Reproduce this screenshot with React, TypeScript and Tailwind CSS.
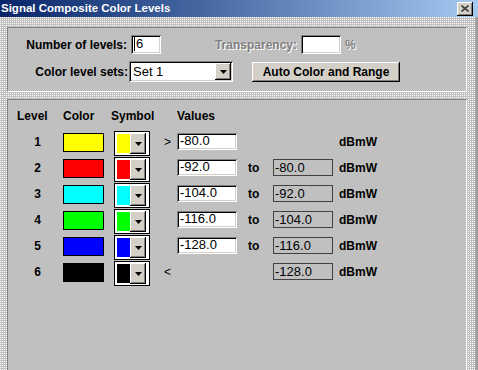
import React from "react";

const raised =
  "bg-[#d4d0c8] shadow-[inset_-1px_-1px_#000,inset_1px_1px_#fff,inset_-2px_-2px_#808080,inset_2px_2px_#d4d0c8]";
const sunken =
  "bg-white shadow-[inset_1px_1px_#808080,inset_-1px_-1px_#fff,inset_2px_2px_#000,inset_-2px_-2px_#d4d0c8]";
const dotted = "bg-[#c0c0c0] bg-[image:conic-gradient(#c0c0c0_75%,#fff_0)] bg-[length:2px_2px]";
const disabled = "text-[#808080] [text-shadow:1px_1px_0_#fff]";

type Level = {
  n: number;
  color: string;
  mark: string;
  value?: string;
  to?: string;
};

const levels: Level[] = [
  { n: 1, color: "#ffff00", mark: ">", value: "-80.0" },
  { n: 2, color: "#ff0000", mark: "", value: "-92.0", to: "-80.0" },
  { n: 3, color: "#00ffff", mark: "", value: "-104.0", to: "-92.0" },
  { n: 4, color: "#00ff00", mark: "", value: "-116.0", to: "-104.0" },
  { n: 5, color: "#0000ff", mark: "", value: "-128.0", to: "-116.0" },
  { n: 6, color: "#000000", mark: "<", to: "-128.0" },
];

function Arrow() {
  return (
    <svg width="7" height="4" viewBox="0 0 7 4">
      <polygon points="0,0 7,0 3.5,4" fill="#000" />
    </svg>
  );
}

function DropButton({ className }: { className: string }) {
  return <div className={`${raised} ${className} flex items-center justify-center`}><Arrow /></div>;
}

function Row({ l }: { l: Level }) {
  return (
    <div className="flex h-[26px] items-start">
      <div className="mt-[4px] w-[55px] pl-[4px] text-center font-bold leading-[14px]">{l.n}</div>
      <div className="mt-[2px] h-[19px] w-[41px] border border-black" style={{ background: l.color }} />
      <div className="ml-[10px] flex h-[25px] w-[36px] items-center border border-black bg-white">
        <div className="ml-[2px] h-[19px] w-[13px]" style={{ background: l.color }} />
        <DropButton className="h-[21px] w-[16px]" />
      </div>
      <div className="mt-[4px] w-[27px] pl-[14px] leading-[14px]">{l.mark}</div>
      <div className="mt-[2px] w-[60px]">
        {l.value && (
          <div className={`${sunken} h-[17px] pl-[3px] text-[13px] leading-[15px]`}>{l.value}</div>
        )}
      </div>
      <div className="mt-[4px] w-[36px] pl-[11px] font-bold leading-[14px]">{l.value && l.to ? "to" : ""}</div>
      <div className="mt-[2px] w-[60px]">
        {l.to && (
          <div className="h-[17px] border border-[#404040] pl-[1px] text-[13px] leading-[15px]">{l.to}</div>
        )}
      </div>
      <div className="ml-[6px] mt-[4px] font-bold leading-[14px]">dBmW</div>
    </div>
  );
}

export default function App() {
  return (
    <div className="flex h-[370px] w-[478px] flex-col overflow-hidden font-['Liberation_Sans',Arial,sans-serif] text-[12px] text-black">
      <div className="flex h-[17px] shrink-0 items-center bg-gradient-to-r from-[#0a246a] to-[#a6caf0] pl-[1px] pr-[5px]">
        <span className="text-[11.5px] font-bold text-white">Signal Composite Color Levels</span>
        <div className={`${raised} ml-auto flex h-[14px] w-[16px] items-center justify-center`}>
          <svg width="8" height="7" viewBox="0 0 8 7">
            <path d="M0.5 0.5 L7.5 6.5 M7.5 0.5 L0.5 6.5" stroke="#404040" strokeWidth="1.6" />
          </svg>
        </div>
      </div>

      <div className={`${dotted} flex flex-1`}>
        <div className="flex flex-1 flex-col pl-[7px] pr-[8px] pt-[10px]">
          <div className="h-[65px] shrink-0 border-b border-l border-r border-t border-b-white border-l-[#808080] border-r-white border-t-[#808080] bg-[#c0c0c0] pt-[7px]">
            <div className="flex h-[19px] items-center">
              <span className="w-[119px] whitespace-nowrap text-right font-bold">Number of levels:</span>
              <div className={`${sunken} ml-[4px] h-[19px] w-[30px] pl-[3px] text-[13px] leading-[17px]`}>
                <span className="border-l border-black pl-[1px]">6</span>
              </div>
              <span className={`${disabled} w-[136px] whitespace-nowrap text-right font-bold`}>Transparency:</span>
              <div className={`${sunken} ml-[4px] h-[19px] w-[40px]`} />
              <span className={`${disabled} ml-[4px] font-bold`}>%</span>
            </div>
            <div className="mt-[7px] flex h-[21px] items-center">
              <span className="w-[120px] whitespace-nowrap text-right font-bold">Color level sets:</span>
              <div className={`${sunken} ml-[1px] flex h-[21px] w-[104px] items-center pl-[4px] pr-[2px]`}>
                <span className="text-[13px]">Set 1</span>
                <DropButton className="ml-auto h-[17px] w-[16px]" />
              </div>
              <button className={`${raised} ml-[19px] h-[20px] w-[148px] font-bold`}>Auto Color and Range</button>
            </div>
          </div>

          <div className="mt-[7px] flex-1 border-l border-r border-t border-l-[#808080] border-r-white border-t-[#808080] bg-[#c0c0c0]">
            <div className="flex h-[31px] pt-[9px] font-bold leading-[14px]">
              <span className="w-[55px] pl-[9px]">Level</span>
              <span className="w-[48px]">Color</span>
              <span className="w-[66px]">Symbol</span>
              <span>Values</span>
            </div>
            {levels.map((l) => (
              <Row key={l.n} l={l} />
            ))}
          </div>
        </div>
        <div className="w-[3px] bg-[#a0a0a0]" />
      </div>
    </div>
  );
}
